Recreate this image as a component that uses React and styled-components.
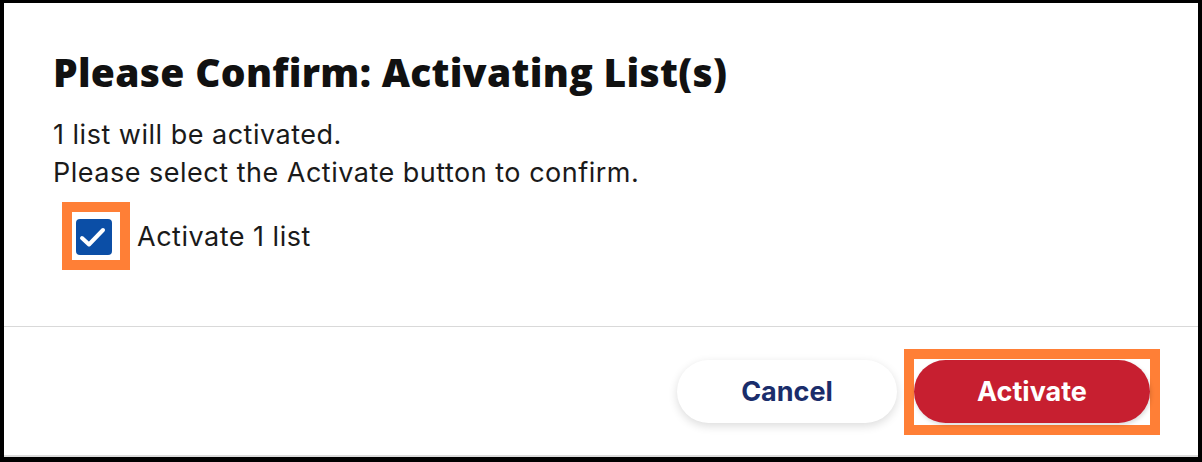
import React from "react";
import styled, { createGlobalStyle } from "styled-components";

const GlobalStyle = createGlobalStyle`
  html, body {
    margin: 0;
    padding: 0;
    background: #fff;
  }
  * { box-sizing: border-box; }
`;

const Dialog = styled.div`
  width: 1202px;
  height: 462px;
  border-style: solid;
  border-color: #000;
  border-width: 3px 4px 5px 4px;
  display: flex;
  flex-direction: column;
  background: #fff;
  box-shadow: inset 0 -2px 0 #dcdcdc;
  font-family: Inter, "Noto Sans", sans-serif;
  color: #1a1a1a;
`;

const Content = styled.div`
  padding: 47px 49px 0;
  height: 324px;
  border-bottom: 1px solid #d9d9d9;
`;

const Title = styled.h1`
  margin: 0 0 22px;
  font-family: "Open Sans", "Noto Sans", sans-serif;
  font-weight: 800;
  font-size: 39px;
  line-height: 44px;
  letter-spacing: 0.3px;
  color: #111;
`;

const Text = styled.p`
  margin: 0;
  font-size: 27px;
  line-height: 38px;
  letter-spacing: 0.5px;
  color: #1a1a1a;
`;

const CheckRow = styled.label`
  display: flex;
  align-items: center;
  gap: 7px;
  margin: 10px 0 0 9px;
  font-size: 27px;
  letter-spacing: 0.5px;
  color: #1a1a1a;
`;

const Highlight = styled.div`
  display: flex;
  border: 10px solid #ff7f36;
  padding: ${(p) => p.$pad || "0"};
  background: #fff;
`;

const Box = styled.span`
  width: 36px;
  height: 36px;
  border-radius: 4px;
  background: #0b4ea6;
  display: flex;
`;

const Footer = styled.div`
  flex: 1;
  display: flex;
  justify-content: flex-end;
  align-items: flex-start;
  gap: 7px;
  padding: 22px 38px 0 0;
`;

const Button = styled.button`
  height: 63px;
  width: ${(p) => p.$width}px;
  border: none;
  border-radius: 32px;
  font-family: Inter, "Noto Sans", sans-serif;
  font-weight: 700;
  font-size: 27px;
  cursor: pointer;
  background: ${(p) => (p.$primary ? "#c71f30" : "#fff")};
  color: ${(p) => (p.$primary ? "#fff" : "#1a2d6b")};
  box-shadow: ${(p) =>
    p.$primary ? "1px 2px 4px rgba(0,0,0,0.15)" : "0 3px 10px rgba(0,0,0,0.14)"};
`;

const CancelWrap = styled.div`
  margin-top: 11px;
`;

export default function App() {
  return (
    <>
      <GlobalStyle />
      <Dialog>
        <Content>
          <Title>Please Confirm: Activating List(s)</Title>
          <Text>1 list will be activated.</Text>
          <Text>Please select the Activate button to confirm.</Text>
          <CheckRow>
            <Highlight $pad="7px 8px 5px 4px">
              <Box>
                <svg width="36" height="36" viewBox="0 0 36 36">
                  <polyline
                    points="6,19 13,25.5 27,11"
                    fill="none"
                    stroke="#fff"
                    strokeWidth="4"
                    strokeLinecap="round"
                    strokeLinejoin="round"
                  />
                </svg>
              </Box>
            </Highlight>
            Activate 1 list
          </CheckRow>
        </Content>
        <Footer>
          <CancelWrap>
            <Button $width={220}>Cancel</Button>
          </CancelWrap>
          <Highlight $pad="1px 0 2px">
            <Button $primary $width={236}>Activate</Button>
          </Highlight>
        </Footer>
      </Dialog>
    </>
  );
}
